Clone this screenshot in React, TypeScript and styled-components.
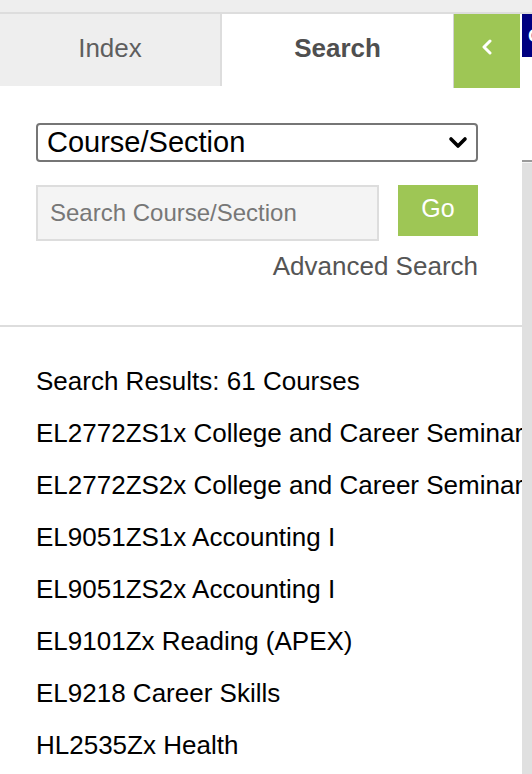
import React from "react";
import styled, { createGlobalStyle } from "styled-components";

const GlobalStyle = createGlobalStyle`
  html, body {
    margin: 0;
    padding: 0;
    background: #ffffff;
    overflow: hidden;
  }
  body {
    width: 532px;
    height: 774px;
    font-family: "Liberation Sans", Arial, sans-serif;
  }
  * { box-sizing: border-box; }
`;

const Page = styled.div`
  width: 532px;
  height: 774px;
  display: flex;
  flex-direction: column;
  overflow: hidden;
`;

const TopStrip = styled.div`
  height: 14px;
  flex: none;
  background: #eeeeee;
  border-bottom: 2px solid #dddddd;
`;

const Body = styled.div`
  flex: 1;
  display: flex;
  min-height: 0;
`;

const Panel = styled.div`
  width: 522px;
  flex: none;
  display: flex;
  flex-direction: column;
  overflow: hidden;
`;

const TabRow = styled.div`
  display: flex;
  align-items: flex-start;
  height: 73px;
  flex: none;
`;

const Tab = styled.div<{ $active?: boolean }>`
  height: 72px;
  display: flex;
  align-items: center;
  justify-content: center;
  padding-bottom: 4px;
  font-size: 26px;
  color: ${(p) => (p.$active ? "#4f4f4f" : "#5e5e5e")};
  font-weight: ${(p) => (p.$active ? 700 : 400)};
  background: ${(p) => (p.$active ? "#ffffff" : "#eeeeee")};
  ${(p) =>
    p.$active
      ? "flex: 1;"
      : "width: 222px; border-right: 2px solid #dddddd;"}
`;

const CollapseButton = styled.button`
  width: 67px;
  height: 74px;
  flex: none;
  margin: 0 2px 0 0;
  padding: 0 0 8px 0;
  border: none;
  border-left: 1px solid #d2d2d2;
  background: #9ec655;
  display: flex;
  align-items: center;
  justify-content: center;
  cursor: pointer;
`;

const Form = styled.div`
  padding: 36px 44px 44px 36px;
  display: flex;
  flex-direction: column;
  border-bottom: 2px solid #dddddd;
`;

const SelectWrap = styled.div`
  position: relative;
  height: 39px;
`;

const Select = styled.select`
  width: 100%;
  height: 39px;
  appearance: none;
  -webkit-appearance: none;
  border: 2px solid #767676;
  border-radius: 4px;
  background: #ffffff;
  color: #000000;
  font-family: "Liberation Sans", Arial, sans-serif;
  font-size: 29px;
  padding: 0 40px 0 9px;
  line-height: 35px;
  outline: none;
`;

const SelectChevron = styled.svg`
  position: absolute;
  right: 10px;
  top: 13px;
  pointer-events: none;
`;

const SearchRow = styled.div`
  margin-top: 23px;
  display: flex;
  align-items: flex-start;
  gap: 19px;
`;

const SearchInput = styled.input`
  flex: 1;
  min-width: 0;
  height: 56px;
  border: 2px solid #dddddd;
  background: #f4f4f4;
  font-family: "Liberation Sans", Arial, sans-serif;
  font-size: 24px;
  color: #333;
  padding: 0 12px;
  outline: none;
  &::placeholder {
    color: #777777;
  }
`;

const GoButton = styled.button`
  width: 80px;
  height: 51px;
  flex: none;
  border: none;
  background: #9ec655;
  color: #ffffff;
  font-family: "Liberation Sans", Arial, sans-serif;
  font-size: 25px;
  padding: 0 0 4px 0;
  cursor: pointer;
`;

const AdvancedLink = styled.a`
  margin-top: 11px;
  align-self: flex-end;
  font-size: 26px;
  line-height: 29px;
  color: #555555;
  text-decoration: none;
  cursor: pointer;
`;

const Results = styled.div`
  padding: 28px 0 0 36px;
  display: flex;
  flex-direction: column;
`;

const ResultRow = styled.div`
  font-size: 26px;
  line-height: 52px;
  color: #000000;
  white-space: nowrap;
`;

const Side = styled.div`
  width: 10px;
  flex: none;
  display: flex;
  flex-direction: column;
  overflow: hidden;
`;

const NavyTab = styled.div`
  height: 43px;
  width: 40px;
  background: #000080;
  color: #ffffff;
  font-weight: 700;
  font-size: 19px;
  padding: 12px 0 0 6px;
  line-height: 19px;
`;

const SideGray = styled.div`
  margin-top: 103px;
  flex: 1;
  background: #e0e0e0;
  border-top: 2px solid #9a9a9a;
  box-shadow: inset 0 1px 0 #f4f4f4;
`;

const results = [
  "EL2772ZS1x College and Career Seminar",
  "EL2772ZS2x College and Career Seminar",
  "EL9051ZS1x Accounting I",
  "EL9051ZS2x Accounting I",
  "EL9101Zx Reading (APEX)",
  "EL9218 Career Skills",
  "HL2535Zx Health",
];

export default function App() {
  return (
    <Page>
      <GlobalStyle />
      <TopStrip />
      <Body>
        <Panel>
          <TabRow>
            <Tab>Index</Tab>
            <Tab $active>Search</Tab>
            <CollapseButton aria-label="Collapse">
              <svg width="12" height="16" viewBox="0 0 12 16">
                <path
                  d="M9 2 L3 8 L9 14"
                  fill="none"
                  stroke="#ffffff"
                  strokeWidth="3"
                  strokeLinecap="round"
                  strokeLinejoin="round"
                />
              </svg>
            </CollapseButton>
          </TabRow>
          <Form>
            <SelectWrap>
              <Select defaultValue="course">
                <option value="course">Course/Section</option>
                <option value="teacher">Teacher</option>
              </Select>
              <SelectChevron width="20" height="13" viewBox="0 0 20 13">
                <path
                  d="M3 3 L10 10 L17 3"
                  fill="none"
                  stroke="#000000"
                  strokeWidth="3.6"
                  strokeLinecap="round"
                  strokeLinejoin="round"
                />
              </SelectChevron>
            </SelectWrap>
            <SearchRow>
              <SearchInput placeholder="Search Course/Section" />
              <GoButton>Go</GoButton>
            </SearchRow>
            <AdvancedLink>Advanced Search</AdvancedLink>
          </Form>
          <Results>
            <ResultRow>Search Results: 61 Courses</ResultRow>
            {results.map((r) => (
              <ResultRow key={r}>{r}</ResultRow>
            ))}
          </Results>
        </Panel>
        <Side>
          <NavyTab>C</NavyTab>
          <SideGray />
        </Side>
      </Body>
    </Page>
  );
}
